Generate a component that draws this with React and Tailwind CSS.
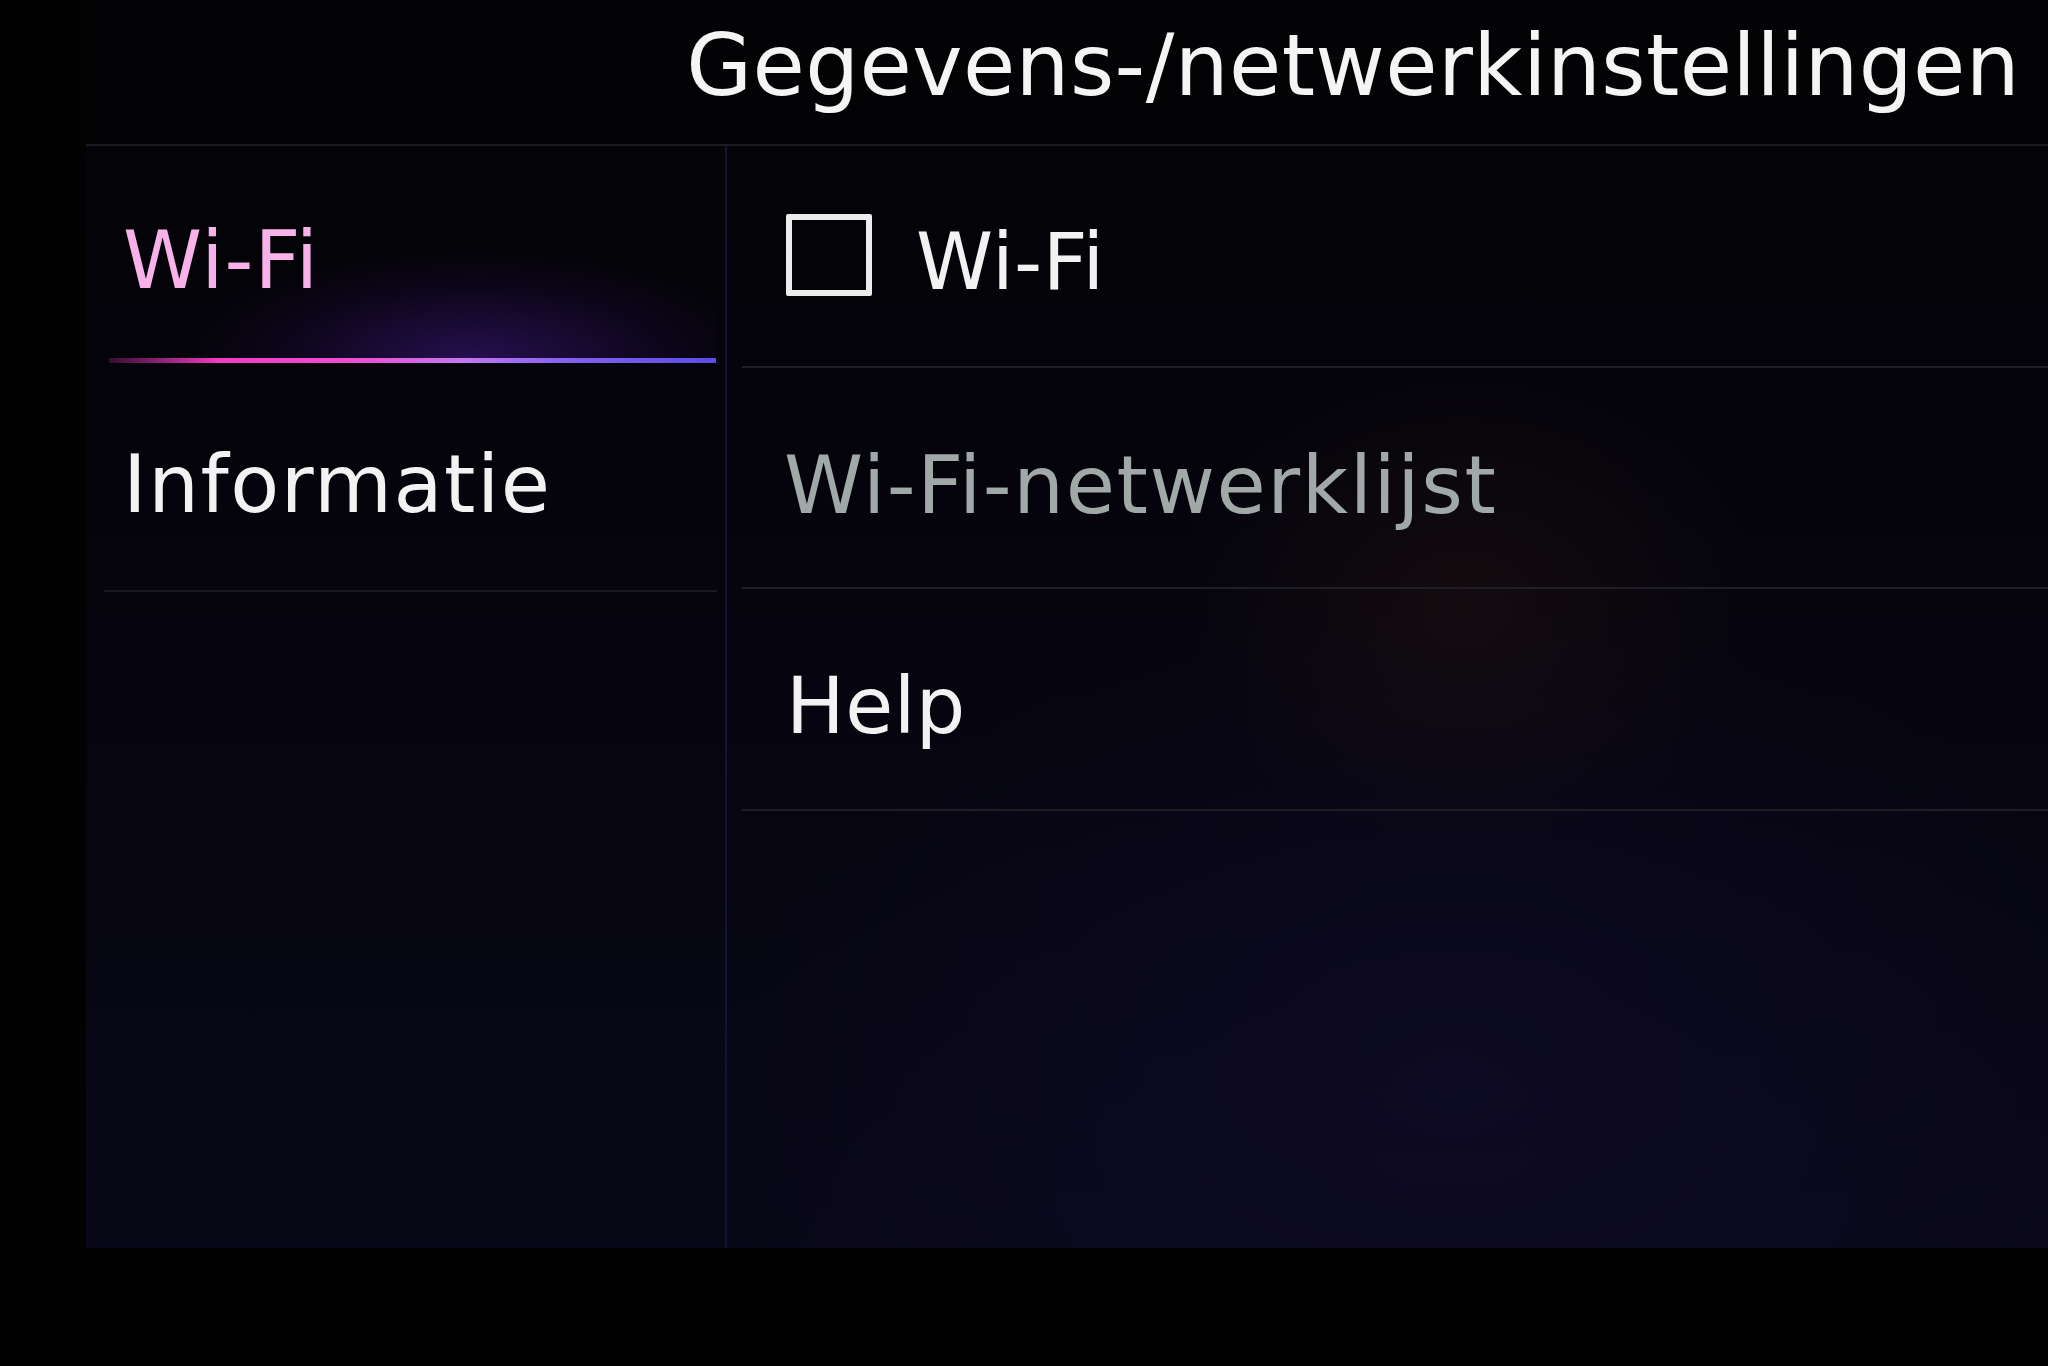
import React from "react";

const font = { fontFamily: '"DejaVu Sans", "Liberation Sans", sans-serif' };

const LeftItem = ({ label, active }) => {
	if (active) {
		return (
			<div className="relative h-[217px]">
				<div className="absolute left-[23px] right-[8px] bottom-[4px] h-[170px] bg-[radial-gradient(ellipse_55%_75%_at_60%_100%,rgba(90,34,190,0.38),rgba(70,20,140,0.14)_55%,transparent_85%)]"></div>
				<p className="relative pl-[37px] pt-[75px] text-[80px] leading-none text-[#f7b2ea] tracking-[1px]">
					{label}
				</p>
				<div className="absolute left-[23px] right-[9px] bottom-0 h-[5px] bg-[linear-gradient(90deg,rgba(200,40,160,0.25)_0%,#f23ac6_18%,#f04cd2_40%,#c477f2_58%,#8260f2_76%,#5a4ce6_100%)]"></div>
			</div>
		);
	}
	return (
		<div className="h-[229px] ml-[18px] mr-[8px] border-b-2 border-[#1a191f]">
			<p className="pl-[19px] pt-[82px] text-[80px] leading-none text-[#f2f2f2] tracking-[1.6px]">
				{label}
			</p>
		</div>
	);
};

export default function App() {
	return (
		<div
			className="w-[2048px] h-[1366px] bg-[#020203] flex flex-col pl-[86px] overflow-hidden"
			style={font}>
			<div className="h-[146px] flex justify-end pr-[28px] pt-[23px] border-b-2 border-[#1c1b21] bg-[#030305]">
				<h1 className="text-[85px] leading-none text-[#f4f4f4] tracking-[0.4px]">
					Gegevens-/netwerkinstellingen
				</h1>
			</div>
			<div className="h-[1102px] flex bg-[linear-gradient(180deg,#040307_0%,#060510_55%,#090818_100%)]">
				<div className="w-[641px] border-r-2 border-[#12123a] flex flex-col">
					<LeftItem label="Wi-Fi" active />
					<LeftItem label="Informatie" />
				</div>
				<div className="flex-1 flex flex-col bg-[radial-gradient(ellipse_22%_22%_at_56%_42%,rgba(45,24,16,0.35),transparent),radial-gradient(ellipse_55%_45%_at_55%_85%,rgba(22,16,60,0.35),transparent)]">
					<div className="h-[222px] ml-[15px] border-b-2 border-[#1f1e24] flex items-start pl-[44px]">
						<div className="mt-[68px] w-[86px] h-[82px] border-[6px] border-[#ececec] rounded-[2px]"></div>
						<span className="mt-[77px] ml-[44px] text-[78px] leading-none text-[#f2f2f2] tracking-[0.5px]">
							Wi-Fi
						</span>
					</div>
					<div className="h-[221px] ml-[15px] border-b-2 border-[#1f1e24] pl-[42px] pt-[78px]">
						<span className="text-[80px] leading-none text-[#a1a8a8] tracking-[1.6px]">
							Wi-Fi-netwerklijst
						</span>
					</div>
					<div className="h-[222px] ml-[15px] border-b-2 border-[#1f1e24] pl-[44px] pt-[78px]">
						<span className="text-[78px] leading-none text-[#f2f2f2] tracking-[0.5px]">
							Help
						</span>
					</div>
				</div>
			</div>
			<div className="flex-1 bg-[#010102]"></div>
		</div>
	);
}
